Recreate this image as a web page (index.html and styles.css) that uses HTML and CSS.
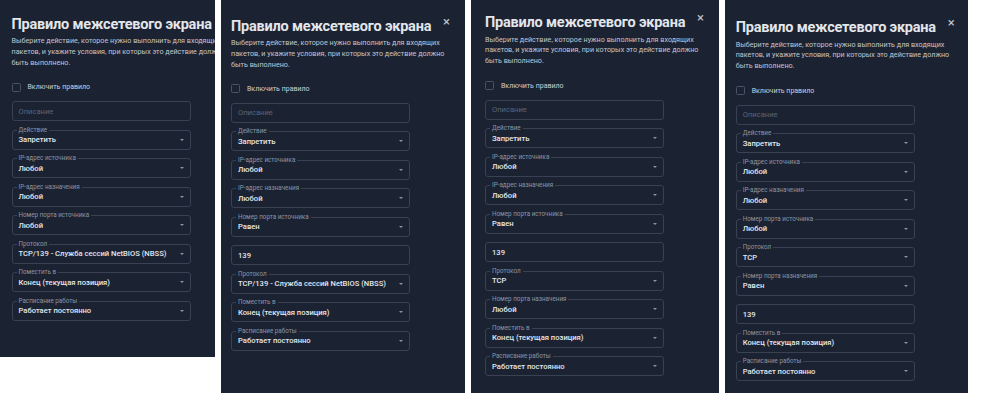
FILE: index.html
```html
<!DOCTYPE html>
<html lang="ru">
<head>
  <meta charset="UTF-8">
  <title>Правило межсетевого экрана</title>
  <link rel="stylesheet" href="styles.css">
</head>
<body>
  <!-- 1: port src as protocol option -->
  <div class="panel panel-1">
    <div class="content">
      <div class="title-row">
        <h2 class="title">Правило межсетевого экрана</h2>
        <span class="close">&times;</span>
      </div>
      <p class="desc">Выберите действие, которое нужно выполнить для входящих пакетов, и укажите условия, при которых это действие должно быть выполнено.</p>
      <label class="check"><span class="box"></span>Включить правило</label>
      <div class="fields">
        <div class="field"><span class="placeholder">Описание</span></div>
        <div class="field select"><span class="legend">Действие</span><span class="value">Запретить</span><span class="arrow"></span></div>
        <div class="field select"><span class="legend">IP-адрес источника</span><span class="value">Любой</span><span class="arrow"></span></div>
        <div class="field select"><span class="legend">IP-адрес назначения</span><span class="value">Любой</span><span class="arrow"></span></div>
        <div class="field select"><span class="legend">Номер порта источника</span><span class="value">Любой</span><span class="arrow"></span></div>
        <div class="field select"><span class="legend">Протокол</span><span class="value">TCP/139 - Служба сессий NetBIOS (NBSS)</span><span class="arrow"></span></div>
        <div class="field select"><span class="legend">Поместить в</span><span class="value">Конец (текущая позиция)</span><span class="arrow"></span></div>
        <div class="field select"><span class="legend">Расписание работы</span><span class="value">Работает постоянно</span><span class="arrow"></span></div>
      </div>
    </div>
  </div>

  <!-- 2: source port equal 139 -->
  <div class="panel panel-2">
    <div class="content">
      <div class="title-row">
        <h2 class="title">Правило межсетевого экрана</h2>
        <span class="close">&times;</span>
      </div>
      <p class="desc">Выберите действие, которое нужно выполнить для входящих пакетов, и укажите условия, при которых это действие должно быть выполнено.</p>
      <label class="check"><span class="box"></span>Включить правило</label>
      <div class="fields">
        <div class="field"><span class="placeholder">Описание</span></div>
        <div class="field select"><span class="legend">Действие</span><span class="value">Запретить</span><span class="arrow"></span></div>
        <div class="field select"><span class="legend">IP-адрес источника</span><span class="value">Любой</span><span class="arrow"></span></div>
        <div class="field select"><span class="legend">IP-адрес назначения</span><span class="value">Любой</span><span class="arrow"></span></div>
        <div class="field select"><span class="legend">Номер порта источника</span><span class="value">Равен</span><span class="arrow"></span></div>
        <div class="field"><span class="value">139</span></div>
        <div class="field select"><span class="legend">Протокол</span><span class="value">TCP/139 - Служба сессий NetBIOS (NBSS)</span><span class="arrow"></span></div>
        <div class="field select"><span class="legend">Поместить в</span><span class="value">Конец (текущая позиция)</span><span class="arrow"></span></div>
        <div class="field select"><span class="legend">Расписание работы</span><span class="value">Работает постоянно</span><span class="arrow"></span></div>
      </div>
    </div>
  </div>

  <!-- 3: source port 139, TCP -->
  <div class="panel panel-3">
    <div class="content">
      <div class="title-row">
        <h2 class="title">Правило межсетевого экрана</h2>
        <span class="close">&times;</span>
      </div>
      <p class="desc">Выберите действие, которое нужно выполнить для входящих пакетов, и укажите условия, при которых это действие должно быть выполнено.</p>
      <label class="check"><span class="box"></span>Включить правило</label>
      <div class="fields">
        <div class="field"><span class="placeholder">Описание</span></div>
        <div class="field select"><span class="legend">Действие</span><span class="value">Запретить</span><span class="arrow"></span></div>
        <div class="field select"><span class="legend">IP-адрес источника</span><span class="value">Любой</span><span class="arrow"></span></div>
        <div class="field select"><span class="legend">IP-адрес назначения</span><span class="value">Любой</span><span class="arrow"></span></div>
        <div class="field select"><span class="legend">Номер порта источника</span><span class="value">Равен</span><span class="arrow"></span></div>
        <div class="field"><span class="value">139</span></div>
        <div class="field select"><span class="legend">Протокол</span><span class="value">TCP</span><span class="arrow"></span></div>
        <div class="field select"><span class="legend">Номер порта назначения</span><span class="value">Любой</span><span class="arrow"></span></div>
        <div class="field select"><span class="legend">Поместить в</span><span class="value">Конец (текущая позиция)</span><span class="arrow"></span></div>
        <div class="field select"><span class="legend">Расписание работы</span><span class="value">Работает постоянно</span><span class="arrow"></span></div>
      </div>
    </div>
  </div>

  <!-- 4: destination port 139, TCP -->
  <div class="panel panel-4">
    <div class="content">
      <div class="title-row">
        <h2 class="title">Правило межсетевого экрана</h2>
        <span class="close">&times;</span>
      </div>
      <p class="desc">Выберите действие, которое нужно выполнить для входящих пакетов, и укажите условия, при которых это действие должно быть выполнено.</p>
      <label class="check"><span class="box"></span>Включить правило</label>
      <div class="fields">
        <div class="field"><span class="placeholder">Описание</span></div>
        <div class="field select"><span class="legend">Действие</span><span class="value">Запретить</span><span class="arrow"></span></div>
        <div class="field select"><span class="legend">IP-адрес источника</span><span class="value">Любой</span><span class="arrow"></span></div>
        <div class="field select"><span class="legend">IP-адрес назначения</span><span class="value">Любой</span><span class="arrow"></span></div>
        <div class="field select"><span class="legend">Номер порта источника</span><span class="value">Любой</span><span class="arrow"></span></div>
        <div class="field select"><span class="legend">Протокол</span><span class="value">TCP</span><span class="arrow"></span></div>
        <div class="field select"><span class="legend">Номер порта назначения</span><span class="value">Равен</span><span class="arrow"></span></div>
        <div class="field"><span class="value">139</span></div>
        <div class="field select"><span class="legend">Поместить в</span><span class="value">Конец (текущая позиция)</span><span class="arrow"></span></div>
        <div class="field select"><span class="legend">Расписание работы</span><span class="value">Работает постоянно</span><span class="arrow"></span></div>
      </div>
    </div>
  </div>
</body>
</html>
```

FILE: styles.css
```css
body {
  margin: 0;
  background: #fff;
  font-family: Roboto, 'Noto Sans', sans-serif;
  display: flex;
  align-items: flex-start;
  gap: 6px;
}

.panel {
  background-color: #1b2232;
  height: 393px;
  overflow: hidden;
  box-sizing: border-box;
  flex-shrink: 0;
}

.panel-1 {
  width: 215px;
  height: 357px;
  padding: 14.8px 0 0 11.5px;
}

.panel-2 {
  width: 244px;
  padding: 16.5px 0 0 10px;
}

.panel-3 {
  width: 248px;
  padding: 13.2px 0 0 14px;
}

.panel-4 {
  width: 243px;
  padding: 18.2px 0 0 10.7px;
}

.content {
  width: 219px;
}

/* Header */
.title-row {
  display: flex;
  justify-content: space-between;
  align-items: flex-start;
}

.title {
  margin: 0;
  font-size: 14.5px;
  line-height: 19px;
  font-weight: 700;
  letter-spacing: -0.2px;
  color: #e3e6eb;
  white-space: nowrap;
}

.close {
  color: #c3c8d0;
  font-size: 13px;
  line-height: 8px;
  margin: 1px 0 0 8px;
}

.desc {
  margin: 2.5px 0 0;
  font-size: 7.2px;
  line-height: 10.8px;
  color: #c1c6cf;
}

/* Checkbox */
.check {
  display: flex;
  align-items: center;
  height: 10px;
  margin-top: 13.6px;
  font-size: 7px;
  color: #cdd1d8;
}

.box {
  width: 7px;
  height: 7px;
  border: 1px solid #4a5366;
  border-radius: 1.5px;
  margin-right: 7px;
}

/* Fields */
.fields {
  display: flex;
  flex-direction: column;
  gap: 8.5px;
  margin-top: 9px;
  width: 179px;
}

.field {
  position: relative;
  height: 20px;
  box-sizing: border-box;
  border: 1px solid #394152;
  border-radius: 3px;
  display: flex;
  align-items: center;
  justify-content: space-between;
  padding: 0 6px;
}

.legend {
  position: absolute;
  top: -5px;
  left: 4px;
  padding: 0 2px;
  background-color: #1b2232;
  font-size: 6.3px;
  line-height: 8px;
  color: #8d95a3;
  white-space: nowrap;
}

.value {
  font-size: 7.6px;
  font-weight: 500;
  color: #e4e7ec;
  white-space: nowrap;
}

.placeholder {
  font-size: 7.6px;
  color: #5c6577;
}

.arrow {
  width: 0;
  height: 0;
  border-left: 2px solid transparent;
  border-right: 2px solid transparent;
  border-top: 2.5px solid #8b93a1;
}
```
